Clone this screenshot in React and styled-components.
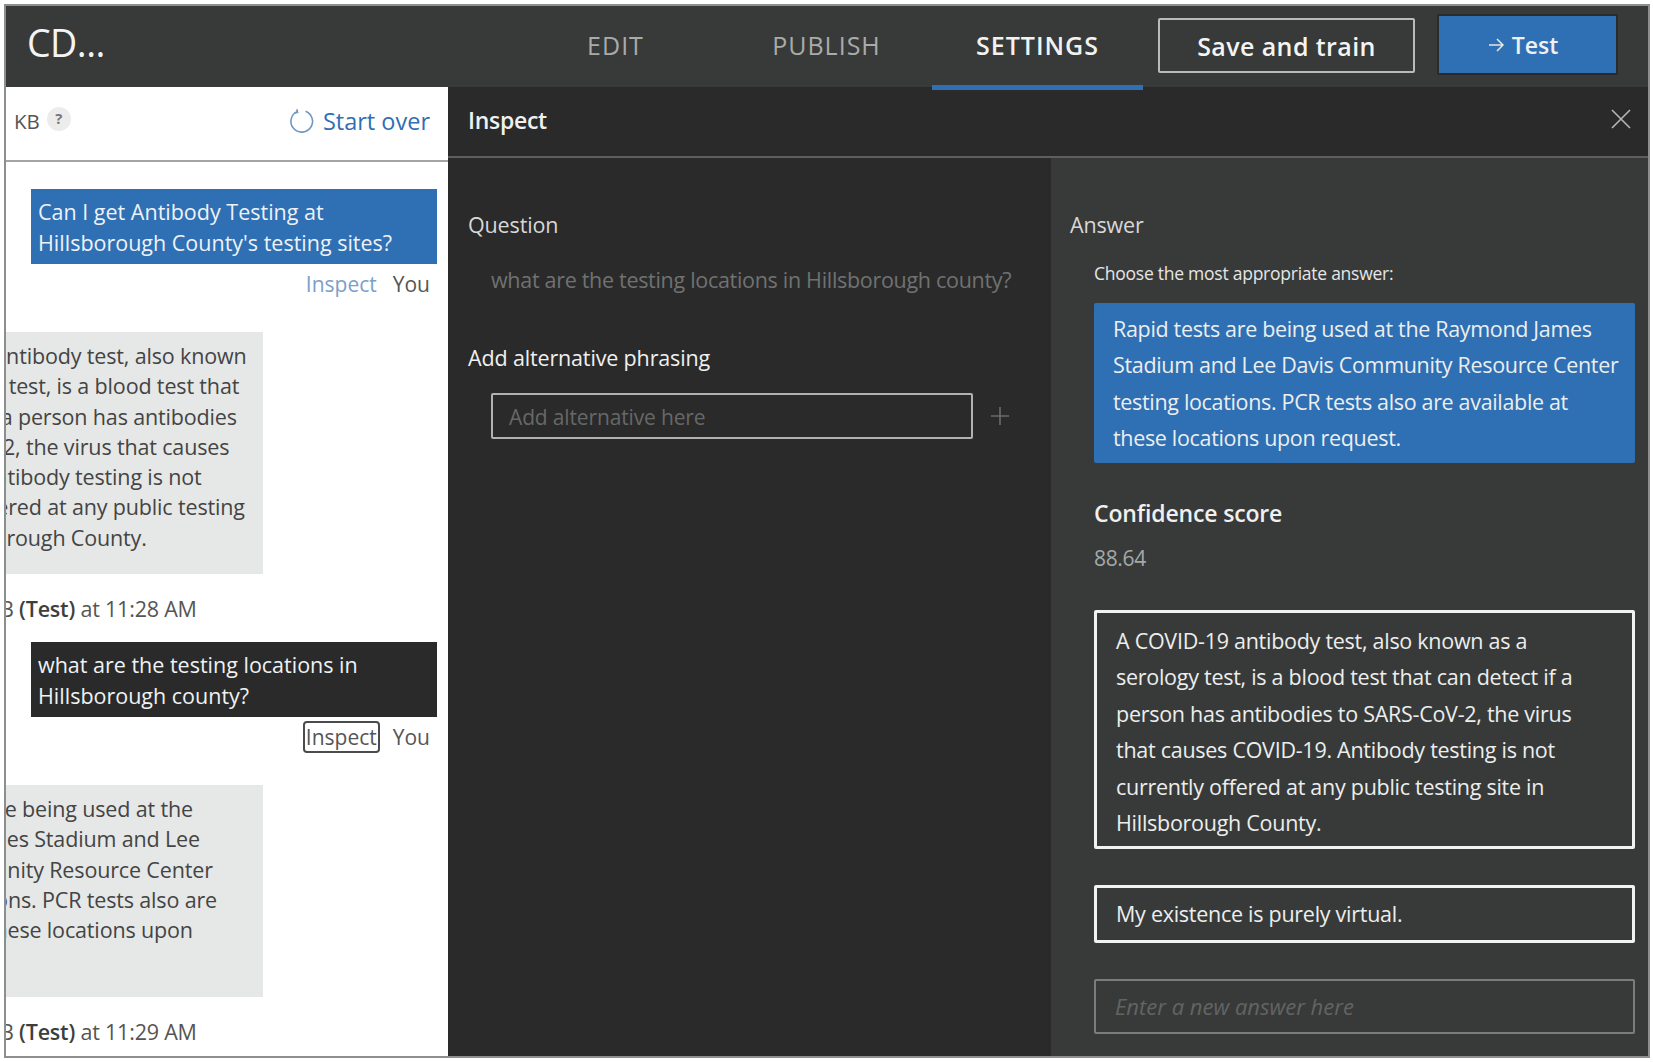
import React from "react";
import styled, { createGlobalStyle } from "styled-components";

const Global = createGlobalStyle`
  html, body { margin: 0; background: #fff; }
  * { box-sizing: border-box; }
  body { font-family: "Open Sans", "Noto Sans", "Liberation Sans", sans-serif; }
`;
const Frame = styled.div`
  margin: 4px 0 0 4px; width: 1646px; height: 1054px; border: 2px solid #8d8f8f;
  display: flex; flex-direction: column; overflow: hidden; background: #2a2a2a;
`;
const TopBar = styled.header`
  flex: none; height: 81px; background: #383a39; display: flex; padding-left: 21px;
  position: relative; z-index: 2;
`;
const Brand = styled.div`
  flex: none; width: 483px; color: #f4f4f4; font-size: 37.5px; font-weight: 500; line-height: 74px; letter-spacing: -0.5px;
`;
const Tabs = styled.nav`display: flex; flex: none;`;
const Tab = styled.div`
  width: 211px; height: 84px; text-align: center; line-height: 79px; font-size: 25px; letter-spacing: 1px;
  color: ${p => (p.$active ? "#f2f2f2" : "#a9abab")}; font-weight: ${p => (p.$active ? 600 : 500)};
  border-bottom: 5px solid ${p => (p.$active ? "#2f6fb3" : "transparent")};
`;
const SaveButton = styled.button`
  flex: none; margin: 12px 0 0 15px; width: 257px; height: 55px; background: transparent;
  border: 2px solid #b9bbbb; border-radius: 2px; color: #f4f4f4; font: 600 25px "Open Sans", sans-serif; letter-spacing: 0.4px; padding: 0;
`;
const TestButton = styled.button`
  flex: none; margin: 10px 0 0 24px; width: 177px; height: 57px; background: #2f6fb3;
  border: 0; box-shadow: 0 0 0 2px #2a2c2c; color: #f0f0f0; font: 600 23px "Open Sans", sans-serif; padding: 0 10px 0 0;
  display: flex; align-items: center; justify-content: center; gap: 7px;
`;
const Body = styled.div`flex: 1; display: flex; min-height: 0;`;

const Chat = styled.section`
  flex: none; width: 442px; background: #fff; overflow: hidden; color: #3d3f3f; font-size: 21.5px;
`;
const ChatHeader = styled.div`
  height: 75px; border-bottom: 2px solid #a3a5a5; display: flex; align-items: center; padding: 0 18px 6px 8px;
`;
const KbLabel = styled.span`font-size: 20.5px; color: #555;`;
const Help = styled.span`
  width: 24px; height: 24px; border-radius: 50%; background: #ececec; color: #777; margin: -4px 0 0 7px;
  font-size: 15px; font-weight: 700; line-height: 22px; text-align: center;
`;
const StartOver = styled.span`
  margin-left: auto; display: flex; align-items: center; gap: 8px; color: #2f6fb3; font-size: 23.5px; font-weight: 500;
`;
const UserBubble = styled.div`
  margin: ${p => p.$top}px 11px 0 25px; height: ${p => p.$h}px; padding: 8px 7px; line-height: 30.5px; color: #eef2f6;
  background: ${p => (p.$dark ? "#2a2a2a" : "#2f6fb3")}; white-space: nowrap;
`;
const Meta = styled.div`
  display: flex; justify-content: flex-end; align-items: center; gap: 15px; margin: 6px 18px 0 0; height: 30px; padding-bottom: 3px; font-size: 21px; color: #555;
`;
const InspectLink = styled.span`
  color: ${p => (p.$focus ? "#555" : "#7ba0c6")}; padding: 0 1px; line-height: 28px;
  outline: ${p => (p.$focus ? "2px solid #4a4c4c" : "none")}; border-radius: 2px;
`;
const BotBubble = styled.div`
  margin: ${p => p.$top}px 0 0 -144px; width: 401px; height: ${p => p.$h}px; padding: 9px 0 0 ${p => p.$pad}px; background: #e6e8e7;
  line-height: 30.3px; white-space: nowrap; color: #444; letter-spacing: -0.15px;
`;
const Stamp = styled.div`
  margin: ${p => p.$top}px 0 0 -6px; height: 30px; line-height: 30px; font-size: 21.5px; letter-spacing: -0.2px; white-space: nowrap; color: #555;
  b { font-weight: 600; color: #3d3f3f; }
`;

const Inspect = styled.section`flex: 1; min-width: 0; display: flex; flex-direction: column; background: #2a2a2a;`;
const InspectHeader = styled.div`
  flex: none; height: 71px; border-bottom: 2px solid #5d5f5f; display: flex; align-items: center; justify-content: space-between;
  padding: 0 15px 4px 20px; color: #f0f0f0; font-size: 23px; font-weight: 600; letter-spacing: -0.3px;
  svg { margin-top: -2px; }
`;
const Columns = styled.div`flex: 1; display: flex; min-height: 0;`;
const QuestionColumn = styled.div`flex: none; width: 603px; padding: 53px 20px 0; `;
const AnswerColumn = styled.div`flex: 1; background: #383a39; padding: 53px 13px 0 19px; min-width: 0;`;
const Label = styled.div`
  color: ${p => (p.$bright ? "#f0f0f0" : "#d8d8d8")}; font-size: ${p => p.$size || 21.5}px; line-height: 28px; letter-spacing: -0.15px;
  margin-top: ${p => p.$top || 0}px; font-weight: ${p => p.$weight || 400};
`;
const QuestionText = styled.div`
  margin: 27px 0 0 23px; color: #707272; font-size: 21.5px; line-height: 28px; letter-spacing: -0.3px; white-space: nowrap;
`;
const AddRow = styled.div`display: flex; align-items: center; margin: 21px 0 0 23px; gap: 17px;`;
const AddInput = styled.div`
  width: 482px; height: 46px; border: 2px solid #b0b2b2; border-radius: 2px; padding: 0 16px; line-height: 44px;
  color: #666868; font-size: 21px; letter-spacing: -0.15px;
`;
const Indented = styled.div`margin-left: 24px;`;
const Hint = styled.div`margin-top: 20px; height: 28px; line-height: 28px; font-size: 17.5px; font-weight: 500; letter-spacing: -0.25px; color: #e6e6e6;`;
const AnswerCard = styled.div`
  margin-top: ${p => p.$top}px; height: ${p => p.$h}px; padding: ${p => p.$py}px 19px 0;
  font-size: 21.5px; line-height: 36.4px; letter-spacing: ${p => (p.$selected ? -0.33 : -0.27)}px; white-space: nowrap; color: #eceeee;
  background: ${p => (p.$selected ? "#2f6fb3" : "transparent")};
  border: ${p => (p.$selected ? "none" : "3px solid #f2f2f2")}; border-radius: 2px;
`;
const NewAnswer = styled.div`
  margin-top: 36px; height: 55px; border: 2px solid #7b7d7d; border-radius: 2px; padding: 0 19px; line-height: 51px;
  font-size: 22px; font-style: italic; color: #626464;
`;
const Score = styled.div`margin-top: 17px; color: #a6a8a8; font-size: 21px; line-height: 28px; letter-spacing: -0.35px;`;

const RefreshIcon = () => (
  <svg width="26" height="26" viewBox="0 0 26 26" fill="none" stroke="#6f97c0" strokeWidth="1.6">
    <path d="M16.5 3.2A10.8 10.8 0 1 1 8 3.6" />
    <path d="M7.8 1.2 8.6 4.4 5.2 5" />
  </svg>
);
const CloseIcon = () => (
  <svg width="24" height="24" viewBox="0 0 24 24" stroke="#b5b7b7" strokeWidth="1.6" fill="none">
    <path d="M3 3 21 21M21 3 3 21" />
  </svg>
);
const PlusIcon = () => (
  <svg width="20" height="20" viewBox="0 0 20 20" stroke="#6a6c6c" strokeWidth="1.6" fill="none">
    <path d="M10 1V19M1 10H19" />
  </svg>
);
const ArrowIcon = () => (
  <svg width="18" height="18" viewBox="0 0 18 18" stroke="#e6e6e6" strokeWidth="1.5" fill="none">
    <path d="M2 9H16M10 3l6 6-6 6" />
  </svg>
);
const Lines = ({ items }) => items.map((t, i) => <div key={i}>{t}</div>);

export default function App() {
  return (
    <>
      <Global />
      <Frame>
        <TopBar>
          <Brand>CD...</Brand>
          <Tabs>
            <Tab>EDIT</Tab>
            <Tab>PUBLISH</Tab>
            <Tab $active>SETTINGS</Tab>
          </Tabs>
          <SaveButton>Save and train</SaveButton>
          <TestButton><ArrowIcon />Test</TestButton>
        </TopBar>
        <Body>
          <Chat>
            <ChatHeader>
              <KbLabel>KB</KbLabel>
              <Help>?</Help>
              <StartOver><RefreshIcon />Start over</StartOver>
            </ChatHeader>
            <UserBubble $top={27} $h={75}>
              <Lines items={["Can I get Antibody Testing at", "Hillsborough County's testing sites?"]} />
            </UserBubble>
            <Meta><InspectLink>Inspect</InspectLink><span>You</span></Meta>
            <BotBubble $top={32} $h={242} $pad={13}>
              <Lines items={["A COVID-19 antibody test, also known", "as a serology test, is a blood test that", "can detect if a person has antibodies", "to SARS-CoV-2, the virus that causes", "COVID-19. Antibody testing is not", "currently offered at any public testing", "site in Hillsborough County."]} />
            </BotBubble>
            <Stamp $top={20}>B <b>(Test)</b> at 11:28 AM</Stamp>
            <UserBubble $top={18} $h={75} $dark>
              <Lines items={["what are the testing locations in", "Hillsborough county?"]} />
            </UserBubble>
            <Meta><InspectLink $focus>Inspect</InspectLink><span>You</span></Meta>
            <BotBubble $top={32} $h={212} $pad={8}>
              <Lines items={["Rapid tests are being used at the", "Raymond James Stadium and Lee", "Davis Community Resource Center", "testing locations. PCR tests also are", "available at these locations upon", "request."]} />
            </BotBubble>
            <Stamp $top={20}>B <b>(Test)</b> at 11:29 AM</Stamp>
          </Chat>
          <Inspect>
            <InspectHeader>Inspect<CloseIcon /></InspectHeader>
            <Columns>
              <QuestionColumn>
                <Label>Question</Label>
                <QuestionText>what are the testing locations in Hillsborough county?</QuestionText>
                <Label $bright $top={50}>Add alternative phrasing</Label>
                <AddRow>
                  <AddInput>Add alternative here</AddInput>
                  <PlusIcon />
                </AddRow>
              </QuestionColumn>
              <AnswerColumn>
                <Label>Answer</Label>
                <Indented>
                  <Hint>Choose the most appropriate answer:</Hint>
                  <AnswerCard $selected $top={16} $h={160} $py={8}>
                    <Lines items={["Rapid tests are being used at the Raymond James", "Stadium and Lee Davis Community Resource Center", "testing locations. PCR tests also are available at", "these locations upon request."]} />
                  </AnswerCard>
                  <Label $bright $weight={600} $size={23} $top={36}>Confidence score</Label>
                  <Score>88.64</Score>
                  <AnswerCard $top={38} $h={239} $py={10}>
                    <Lines items={["A COVID-19 antibody test, also known as a", "serology test, is a blood test that can detect if a", "person has antibodies to SARS-CoV-2, the virus", "that causes COVID-19. Antibody testing is not", "currently offered at any public testing site in", "Hillsborough County."]} />
                  </AnswerCard>
                  <AnswerCard $top={36} $h={58} $py={8}>My existence is purely virtual.</AnswerCard>
                  <NewAnswer>Enter a new answer here</NewAnswer>
                </Indented>
              </AnswerColumn>
            </Columns>
          </Inspect>
        </Body>
      </Frame>
    </>
  );
}
